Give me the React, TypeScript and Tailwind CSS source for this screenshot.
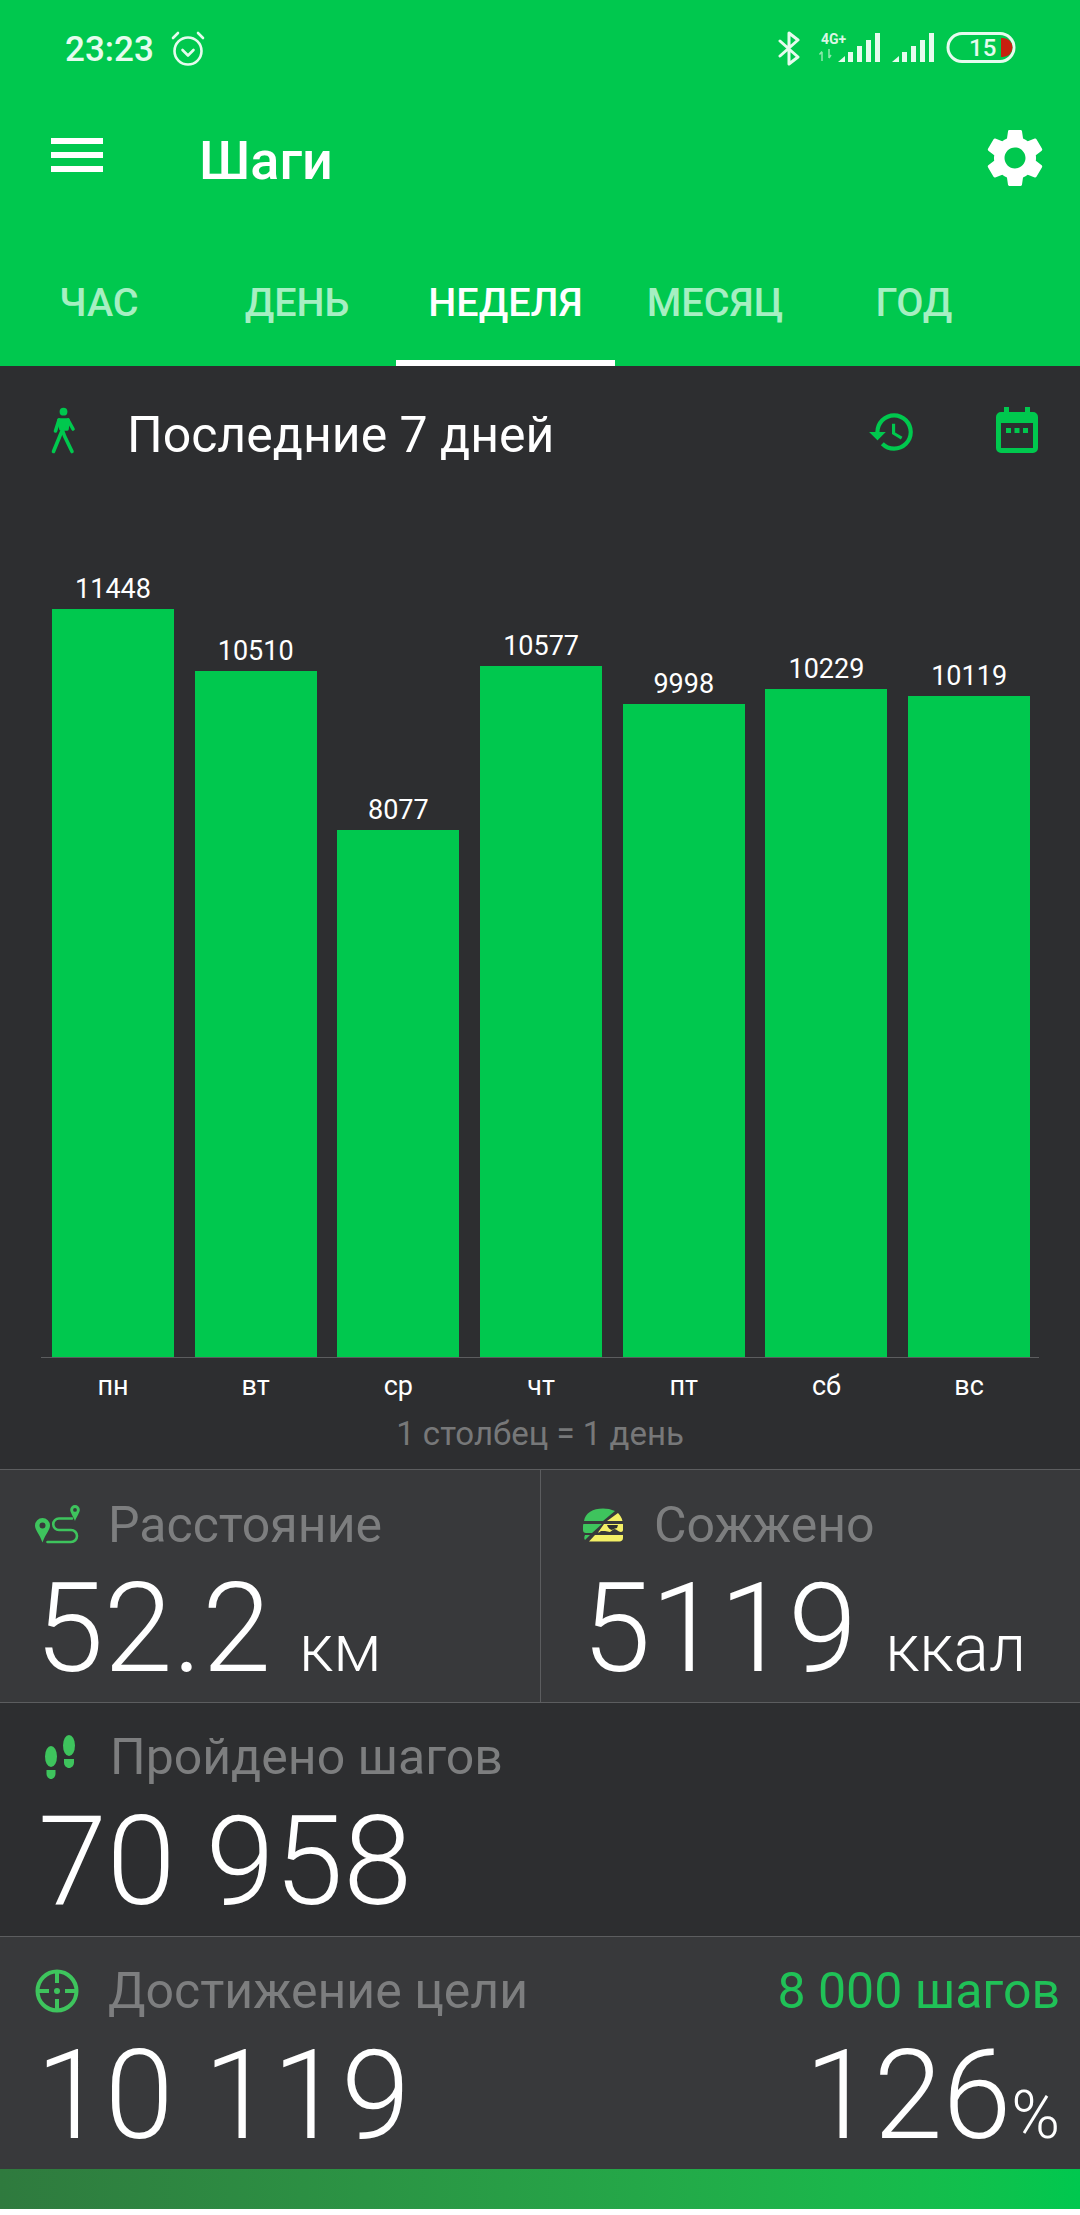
import React from "react";

const days = [
  { d: "пн", v: 11448 },
  { d: "вт", v: 10510 },
  { d: "ср", v: 8077 },
  { d: "чт", v: 10577 },
  { d: "пт", v: 9998 },
  { d: "сб", v: 10229 },
  { d: "вс", v: 10119 },
];

const tabs = [
  { t: "ЧАС", w: "w-[198px]", on: false },
  { t: "ДЕНЬ", w: "w-[198px]", on: false },
  { t: "НЕДЕЛЯ", w: "w-[219px]", on: true },
  { t: "МЕСЯЦ", w: "w-[200px]", on: false },
  { t: "ГОД", w: "w-[198px]", on: false },
];

function StatusIcons() {
  return (
    <svg width="250" height="36" viewBox="0 0 250 36" className="block">
      <g stroke="#e6fbee" fill="none" strokeWidth="3" strokeLinejoin="round" strokeLinecap="round">
        <path d="M2 10 L20 26 L11 33 L11 2 L20 9 L2 25" />
      </g>
      <text x="43" y="13" fontSize="14" fontWeight="700" fill="#d8f7e3" fontFamily="Roboto, sans-serif">4G+</text>
      <path d="M44 30v-9M41.500 23.500l2.500-3M51 18v9M51 27l2-3" stroke="#8fe8ae" strokeWidth="1.500" fill="none" />
      <g fill="#e6fbee">
        <path d="M60 31 L67 25 V31 Z" />
        <rect x="70" y="21" width="5" height="10" />
        <rect x="79" y="15" width="5" height="16" />
        <rect x="88" y="9" width="5" height="22" />
        <rect x="97" y="2" width="5" height="29" />
        <path d="M114 31 L121 25 V31 Z" />
        <rect x="124" y="21" width="5" height="10" />
        <rect x="133" y="15" width="5" height="16" />
        <rect x="142" y="9" width="5" height="22" />
        <rect x="151" y="2" width="5" height="29" />
      </g>
      <rect x="170" y="2.500" width="66" height="28" rx="14" fill="none" stroke="#e6fbee" strokeWidth="3" />
      <path d="M223 7h2a9.500 9.500 0 0 1 0 19h-2z" fill="#c8200f" />
      <text x="191" y="25" fontSize="24" fontWeight="500" fill="#e6fbee" fontFamily="Roboto, sans-serif">15</text>
    </svg>
  );
}

function Alarm() {
  return (
    <svg width="36" height="36" viewBox="0 0 36 36" fill="none" stroke="#e6fbee" strokeWidth="2.600" strokeLinecap="round" strokeLinejoin="round">
      <circle cx="18" cy="20" r="13.500" />
      <path d="M12.500 19l5.500 5.500 5.500-5.500" />
      <path d="M3 7l5-5M33 7l-5-5" />
    </svg>
  );
}

function Walker() {
  return (
    <svg width="26" height="48" viewBox="0 0 26 48" fill="none" stroke="#00c84e" strokeWidth="3.600" strokeLinecap="round" strokeLinejoin="round">
      <circle cx="12.500" cy="4.700" r="3.900" fill="#00c84e" stroke="none" />
      <path d="M8 13h9l-1 9h-6z" fill="#00c84e" />
      <path d="M8 13 L4.500 24M17 13 L22 22" />
      <path d="M11 22 L13.500 29 L21 44.500" />
      <path d="M10.500 25 L2.500 44.500" />
    </svg>
  );
}

function HistoryIcon() {
  return (
    <svg width="50" height="50" viewBox="0 0 24 24" fill="#00c84e">
      <path d="M13 3a9 9 0 0 0-9 9H1l3.890 3.890.07.140L9 12H6c0-3.870 3.130-7 7-7s7 3.130 7 7-3.130 7-7 7c-1.930 0-3.680-.79-4.940-2.060l-1.420 1.420A8.954 8.954 0 0 0 13 21a9 9 0 0 0 0-18zm-1 5v5l4.280 2.540.72-1.210-3.500-2.080V8H12z" />
    </svg>
  );
}

function CalendarIcon() {
  return (
    <svg width="42" height="46" viewBox="0 0 42 46" fill="#00c84e">
      <rect x="8" y="0" width="5" height="8" />
      <rect x="29" y="0" width="5" height="8" />
      <path fillRule="evenodd" d="M5 5h32a5 5 0 0 1 5 5v31a5 5 0 0 1-5 5H5a5 5 0 0 1-5-5V10a5 5 0 0 1 5-5zM5 16v25h32V16z" />
      <rect x="10" y="21" width="5" height="5" />
      <rect x="18.500" y="21" width="5" height="5" />
      <rect x="27" y="21" width="5" height="5" />
    </svg>
  );
}

function RouteIcon() {
  return (
    <svg width="46" height="40" viewBox="0 0 46 40" fill="none">
      <path fillRule="evenodd" d="M7.500 13a7.500 7.500 0 0 1 7.500 7.500c0 4.500-4.800 9-7.500 17-2.700-8-7.500-12.500-7.500-17A7.500 7.500 0 0 1 7.500 13zm0 4.500a3 3 0 1 0 0 6 3 3 0 0 0 0-6z" fill="#3ec45d" />
      <path fillRule="evenodd" d="M40 0a4.800 4.800 0 0 1 4.800 4.800c0 3-3 6.500-4.800 11.200-1.800-4.700-4.800-8.200-4.800-11.200A4.800 4.800 0 0 1 40 0zm0 3a1.900 1.900 0 1 0 0 3.800 1.900 1.900 0 0 0 0-3.800z" fill="#3ec45d" />
      <path d="M37 13.500H24a5.700 5.700 0 0 0 0 11.500h12a6 6 0 0 1 0 12H12.500" stroke="#3ec45d" strokeWidth="2.600" strokeLinecap="round" />
    </svg>
  );
}

function BurgerIcon() {
  return (
    <svg width="40" height="34" viewBox="0 0 40 34">
      <path d="M1 13C2 5 10 0.500 20 0.500c4 0 8 .8 12 2.500L20 13z" fill="#3ec45d" />
      <path d="M1 16h18l-10 9H3c-2 0-3-1-3-3v-3c0-2 0-3 1-3z" fill="#3ec45d" />
      <path d="M2 27h5l-5 5c-1-1-1-3 0-5z" fill="#3ec45d" />
      <path d="M35 5c2 2 4 5 4.500 8H24z" fill="#f4f066" />
      <path d="M21 16h19v6c0 1-1 2-2 2-3 0-4-3-7-3l-4 3-5-1h-4l-2 1.500-1 0z" fill="#f4f066" />
      <path d="M24 17h11l-1 3c-3 1-4 1-5 2-2-.5-4-2-5-5z" fill="#2d2e30" />
      <path d="M12 27h28v3c0 2-1.500 3.500-3.500 3.500H6z" fill="#f4f066" />
    </svg>
  );
}

function FeetIcon() {
  return (
    <svg width="30" height="44" viewBox="0 0 30 44" fill="#3ec45d">
      <ellipse cx="6" cy="21.500" rx="6" ry="10.500" />
      <path d="M1.500 35h9v3.500c0 3-2 5.500-4.500 5.500s-4.500-2.500-4.500-5.500z" />
      <ellipse cx="24" cy="10.500" rx="6" ry="10.500" />
      <path d="M19 24h10v3.500c0 3-2.300 5.500-5 5.500s-5-2.500-5-5.500z" />
    </svg>
  );
}

function TargetIcon() {
  return (
    <svg width="44" height="44" viewBox="0 0 44 44" fill="none" stroke="#3ec45d" strokeWidth="4">
      <circle cx="22" cy="22" r="19.500" />
      <path d="M22 3v11M22 30v11M3 22h11M30 22h11" />
      <circle cx="22" cy="22" r="3" fill="#3ec45d" stroke="none" />
    </svg>
  );
}

export default function App() {
  return (
    <div className="w-[1080px] h-[2215px] flex flex-col bg-white font-['Roboto',sans-serif] overflow-hidden">
      <header className="h-[366px] shrink-0 bg-[#00c84e] flex flex-col text-white">
        <div className="h-[100px] flex items-start pt-[31px] pl-[65px] pr-[52px] justify-between">
          <div className="flex items-center gap-[16px] h-[36px]">
            <span className="text-[35px] font-medium leading-none text-[#e6fbee]">23:23</span>
            <Alarm />
          </div>
          <StatusIcons />
        </div>
        <div className="h-[116px] flex items-center pl-[51px] pr-[30px] justify-between">
          <div className="flex items-center">
            <div className="flex flex-col gap-[8px] w-[52px] -mt-[6px]">
              <div className="h-[6px] bg-white" />
              <div className="h-[6px] bg-white" />
              <div className="h-[6px] bg-white" />
            </div>
            <span className="ml-[96px] mt-[6px] text-[54px] font-medium leading-none">Шаги</span>
          </div>
          <svg width="70" height="70" viewBox="0 0 24 24" fill="#fff">
            <path d="M19.140 12.940c.04-.3.06-.61.06-.94 0-.32-.02-.64-.07-.94l2.030-1.580a.49.49 0 0 0 .12-.61l-1.920-3.320a.488.488 0 0 0-.59-.22l-2.390.96c-.5-.38-1.030-.7-1.620-.94l-.36-2.540a.484.484 0 0 0-.48-.41h-3.840c-.24 0-.43.17-.47.41l-.36 2.540c-.59.24-1.130.57-1.620.94l-2.390-.96c-.22-.08-.47 0-.59.22L2.740 8.870c-.12.21-.08.47.12.61l2.030 1.580c-.05.3-.09.63-.09.94s.02.64.07.94l-2.030 1.580a.49.49 0 0 0-.12.61l1.920 3.320c.12.22.37.29.59.22l2.390-.96c.5.38 1.030.7 1.620.94l.36 2.540c.05.24.24.41.48.41h3.840c.24 0 .44-.17.47-.41l.36-2.540c.59-.24 1.130-.56 1.620-.94l2.390.96c.22.08.47 0 .59-.22l1.920-3.320c.12-.22.07-.47-.12-.61l-2.010-1.580zM12 15.600c-1.980 0-3.600-1.620-3.600-3.600s1.620-3.600 3.600-3.600 3.600 1.620 3.600 3.600-1.620 3.600-3.600 3.600z" />
          </svg>
        </div>
        <div className="flex-1 flex items-stretch">
          {tabs.map((t) => (
            <div
              key={t.t}
              className={`${t.w} flex items-center justify-center pt-[29px] text-[39.500px] font-medium leading-none border-b-[6px] ${
                t.on ? "border-white text-white" : "border-transparent text-[#a6efc2]"
              }`}
            >
              {t.t}
            </div>
          ))}
        </div>
      </header>

      <section className="h-[1103px] shrink-0 bg-[#2d2e30] flex flex-col">
        <div className="h-[138px] shrink-0 flex items-start pt-[41px] pl-[51px]">
          <Walker />
          <span className="ml-[50px] mt-[3px] text-[50px] leading-[50px] text-white">Последние 7 дней</span>
          <div className="ml-auto flex items-start gap-[79px] pr-[42px]">
            <HistoryIcon />
            <CalendarIcon />
          </div>
        </div>
        <div className="h-[854px] shrink-0 mx-[41px] border-b border-[#5c5d5f] flex items-end gap-[20.700px] pl-[11px]">
          {days.map((x) => (
            <div key={x.d} className="w-[122px] flex flex-col items-center">
              <span className="text-[27px] leading-[34px] mb-[3px] text-white">{x.v}</span>
              <div className="w-full bg-[#00c84e]" style={{ height: x.v * 0.0653 }} />
            </div>
          ))}
        </div>
        <div className="mx-[41px] pl-[11px] flex gap-[20.700px] pt-[11px]">
          {days.map((x) => (
            <span key={x.d} className="w-[122px] text-center text-[27px] leading-[34px] text-white">
              {x.d}
            </span>
          ))}
        </div>
        <div className="mt-[12px] text-center text-[33px] leading-[38px] text-[#777879]">1 столбец = 1 день</div>
      </section>

      <div className="h-[234px] shrink-0 bg-[#38393b] border-y border-[#5c5d5f] flex">
        <div className="w-[541px] border-r border-[#5c5d5f] pl-[35px] pt-[30px]">
          <div className="flex items-center">
            <RouteIcon />
            <span className="ml-[27px] text-[50px] leading-[50px] text-[#7d7e7f]">Расстояние</span>
          </div>
          <div className="flex items-baseline mt-[24px] pl-[0px] text-white font-light">
            <span className="text-[124px] leading-[110px]">52.2</span>
            <span className="ml-[28px] text-[66px] leading-none">км</span>
          </div>
        </div>
        <div className="flex-1 pl-[42px] pt-[30px]">
          <div className="flex items-center">
            <BurgerIcon />
            <span className="ml-[31px] text-[50px] leading-[50px] text-[#7d7e7f]">Сожжено</span>
          </div>
          <div className="flex items-baseline mt-[24px] -ml-[1px] text-white font-light">
            <span className="text-[124px] leading-[110px]">5119</span>
            <span className="ml-[28px] text-[66px] leading-none">ккал</span>
          </div>
        </div>
      </div>

      <div className="h-[234px] shrink-0 bg-[#2d2e30] border-b border-[#5c5d5f] pl-[45px] pt-[29px]">
        <div className="flex items-center">
          <FeetIcon />
          <span className="ml-[35px] text-[50px] leading-[50px] text-[#7d7e7f]">Пройдено шагов</span>
        </div>
        <div className="mt-[25px] -ml-[7px] text-[124px] leading-[110px] font-light text-white">70 958</div>
      </div>

      <div className="h-[232px] shrink-0 bg-[#38393b] pl-[35px] pr-[20px] pt-[29px]">
        <div className="flex items-center">
          <TargetIcon />
          <span className="ml-[29px] text-[50px] leading-[50px] text-[#7d7e7f]">Достижение цели</span>
          <span className="ml-auto text-[50px] leading-[50px] text-[#20c157]">8 000 шагов</span>
        </div>
        <div className="flex items-baseline mt-[25px] pl-[1px] text-white font-light">
          <span className="text-[124px] leading-[110px]">10 119</span>
          <span className="ml-auto text-[124px] leading-[110px]">126</span>
          <span className="text-[66px] leading-none">%</span>
        </div>
      </div>

      <div className="h-[40px] shrink-0 bg-gradient-to-r from-[#2f7a3e] to-[#00c84e]" />
    </div>
  );
}
